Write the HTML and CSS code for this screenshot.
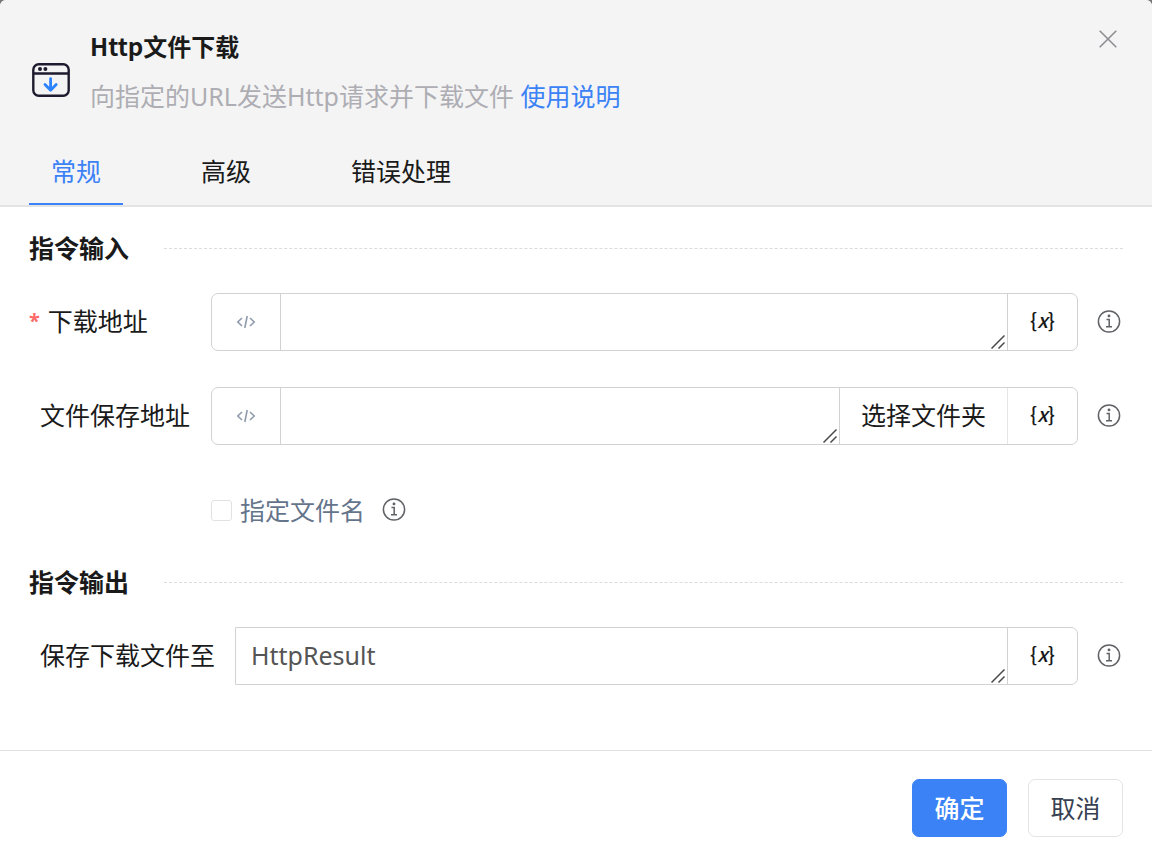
FILE: index.html
```html
<!DOCTYPE html>
<html lang="zh-CN">
    <head>
        <meta charset="UTF-8">
        <title>Http文件下载</title>
        <link rel="stylesheet" href="styles.css">
    </head>
    <body>
        <svg width="0" height="0" class="sprite">
            <symbol id="info" viewBox="0 0 24 24">
                <circle cx="12" cy="11.5" r="10.6" />
                <path d="M9.5 9.5h2.7v7M9 16.7h6" />
                <circle cx="12" cy="5.9" r="0.7" />
            </symbol>
            <symbol id="code" viewBox="0 0 20 16">
                <path d="M6 4L1.8 8L6 12M14 4l4.2 4L14 12M11.2 2L8.8 14" />
            </symbol>
            <symbol id="grip" viewBox="0 0 14 14">
                <path d="M0.5 13.5l13-13M7.5 13.5l6-6" />
            </symbol>
        </svg>

        <form class="dialog">
            <header class="dialog-header">
                <div class="header-top">
                    <svg class="header-icon" viewBox="0 0 38 34">
                        <rect x="1.3" y="1.3" width="35.4" height="31.4" rx="5.5" />
                        <path d="M1.3 10.5h35.4" />
                        <circle cx="8" cy="6" r="2" class="dot" />
                        <circle cx="13.4" cy="6" r="2" class="dot" />
                        <path d="M18.6 15.6v11.6M13 21.6l5.6 5.6l5.6-5.6" class="arrow" />
                    </svg>
                    <div class="header-text">
                        <h1 class="title">Http文件下载</h1>
                        <p class="desc">向指定的URL发送Http请求并下载文件 <a href="#help">使用说明</a></p>
                    </div>
                    <button type="button" class="close-button" aria-label="关闭">
                        <svg viewBox="0 0 18 18"><path d="M0.7 0.7l16.6 16.6M17.3 0.7L0.7 17.3" /></svg>
                    </button>
                </div>
                <nav class="tabs">
                    <button type="button" class="tab active">常规</button>
                    <button type="button" class="tab">高级</button>
                    <button type="button" class="tab">错误处理</button>
                </nav>
            </header>

            <main class="dialog-body">
                <h2 class="section-title">指令输入</h2>

                <div class="form-row">
                    <label for="url" class="row-label required">下载地址</label>
                    <div class="input-group">
                        <button type="button" class="code-button" aria-label="代码"><svg><use href="#code" /></svg></button>
                        <div class="text-wrap">
                            <textarea id="url" rows="1"></textarea>
                            <svg class="grip"><use href="#grip" /></svg>
                        </div>
                        <button type="button" class="var-button">{<i>x</i>}</button>
                    </div>
                    <svg class="info-icon"><use href="#info" /></svg>
                </div>

                <div class="form-row">
                    <label for="folder" class="row-label">文件保存地址</label>
                    <div class="input-group">
                        <button type="button" class="code-button" aria-label="代码"><svg><use href="#code" /></svg></button>
                        <div class="text-wrap">
                            <textarea id="folder" rows="1"></textarea>
                            <svg class="grip"><use href="#grip" /></svg>
                        </div>
                        <button type="button" class="folder-button">选择文件夹</button>
                        <button type="button" class="var-button light">{<i>x</i>}</button>
                    </div>
                    <svg class="info-icon"><use href="#info" /></svg>
                </div>

                <div class="form-row check-row">
                    <input type="checkbox" id="rename" class="checkbox">
                    <label for="rename" class="check-label">指定文件名</label>
                    <svg class="info-icon"><use href="#info" /></svg>
                </div>

                <h2 class="section-title">指令输出</h2>

                <div class="form-row">
                    <label for="result" class="row-label">保存下载文件至</label>
                    <div class="input-group square">
                        <div class="text-wrap">
                            <textarea id="result" rows="1">HttpResult</textarea>
                            <svg class="grip"><use href="#grip" /></svg>
                        </div>
                        <button type="button" class="var-button">{<i>x</i>}</button>
                    </div>
                    <svg class="info-icon"><use href="#info" /></svg>
                </div>
            </main>

            <footer class="dialog-footer">
                <button type="submit" class="button primary">确定</button>
                <button type="button" class="button">取消</button>
            </footer>
        </form>
    </body>
</html>
```
FILE: styles.css
```css
*{
    box-sizing: border-box;
}
body{
    margin: 0;
    background-color: #777;
    font-family: "Noto Sans", "Noto Sans CJK SC", sans-serif;
    font-size: 25px;
    line-height: 36px;
    color: #1a1a1a;
}
button, textarea{
    font: inherit;
    color: inherit;
    margin: 0;
    padding: 0;
    border: none;
    background-color: transparent;
}
button{
    cursor: pointer;
}
svg{
    display: block;
    fill: none;
    stroke: currentColor;
}
.sprite{
    position: absolute;
}
.dialog{
    display: flex;
    flex-direction: column;
    min-height: 100vh;
    background-color: white;
    border-radius: 6px 6px 0 0;
    overflow: hidden;
}

/* header */
.dialog-header{
    padding: 28px 29px 0;
    background-color: #f4f4f4;
    border-bottom: 2px solid #e4e4e4;
}
.header-top{
    display: flex;
    align-items: flex-start;
}
.header-icon{
    width: 38px;
    height: 34px;
    margin: 35px 20px 0 3px;
    color: #1e1b2e;
    stroke-width: 2.4;
}
.header-icon .dot{
    fill: #1e1b2e;
    stroke: none;
}
.header-icon .arrow{
    stroke: #2b83ff;
    stroke-width: 2.8;
    stroke-linecap: round;
    stroke-linejoin: round;
}
.header-text{
    flex: 1;
}
.title{
    margin: 0 0 14px;
    font-family: "Noto Sans CJK SC", sans-serif;
    font-size: 24px;
    font-weight: 700;
}
.desc{
    margin: 0;
    color: #adadb3;
}
.desc a{
    color: #3b82f6;
    text-decoration: none;
}
.close-button{
    padding: 2px 6px;
    color: #8e8e93;
}
.close-button svg{
    width: 18px;
    height: 18px;
    stroke-width: 1.6;
}
.tabs{
    display: flex;
    gap: 56px;
    margin-top: 39px;
}
.tab{
    padding: 0 22px 14px;
    border-bottom: 2px solid transparent;
}
.tab.active{
    color: #3b82f6;
    border-bottom-color: #3b82f6;
}

/* form */
.dialog-body{
    flex: 1;
    padding: 21px 29px 65px;
}
.section-title{
    display: flex;
    align-items: center;
    gap: 35px;
    margin: 0 0 25px;
    font-size: 25px;
    font-weight: 700;
    line-height: 40px;
}
.section-title::after{
    content: "";
    flex: 1;
    border-top: 1px dashed #dcdce0;
}
.form-row{
    display: flex;
    align-items: center;
    min-height: 58px;
    margin-bottom: 36px;
    padding-right: 2px;
}
.form-row:last-child{
    margin-bottom: 0;
}
.row-label{
    min-width: 182px;
    padding: 0 20px 2px 11px;
}
.required{
    display: flex;
    gap: 8px;
    padding-left: 0;
}
.required::before{
    content: "*";
    color: #ff6b6b;
    font-size: 20px;
    font-weight: 700;
}
.input-group{
    flex: 1;
    display: flex;
    height: 58px;
    border: 1px solid #d2d2d2;
    border-radius: 7px;
}
.input-group.square{
    border-radius: 0 7px 7px 0;
}
.code-button{
    width: 69px;
    border-right: 1px solid #d2d2d2;
    color: #8f9bac;
}
.code-button svg{
    width: 20px;
    height: 16px;
    margin: 0 auto;
    stroke-width: 1.6;
}
.text-wrap{
    position: relative;
    flex: 1;
    display: flex;
}
.text-wrap textarea{
    width: 100%;
    padding: 9px 15px;
    resize: none;
    outline: none;
    overflow: hidden;
    color: #555;
}
.grip{
    position: absolute;
    right: 2px;
    bottom: 1px;
    width: 14px;
    height: 14px;
    color: #4a4a4a;
    stroke-width: 1.5;
    pointer-events: none;
}
.var-button{
    width: 70px;
    padding-bottom: 4px;
    border-left: 1px solid #d2d2d2;
    font-family: "Noto Sans CJK SC", sans-serif;
    font-size: 20px;
    font-weight: 500;
}
.var-button.light{
    border-left-color: #e6e6e6;
}
.folder-button{
    padding: 0 21px 2px;
    border-left: 1px solid #d2d2d2;
}
.info-icon{
    width: 24px;
    height: 24px;
    margin-left: 19px;
    color: #606266;
    stroke-width: 1.5;
}
.check-row{
    margin: 0 0 23px;
    padding-left: 182px;
}
.checkbox{
    appearance: none;
    width: 21px;
    height: 21px;
    margin: 0 8px 0 0;
    border: 1px solid #e2e2e2;
    border-radius: 3px;
}
.checkbox:checked{
    background-color: #3b82f6;
}
.check-label{
    color: #64748b;
}
.check-row .info-icon{
    margin-left: 17px;
}

/* footer */
.dialog-footer{
    display: flex;
    justify-content: flex-end;
    gap: 21px;
    padding: 28px 29px 29px;
    border-top: 1px solid #e2e2e2;
}
.button{
    min-width: 95px;
    height: 58px;
    border: 1px solid #e4e4e8;
    border-radius: 7px;
    color: #374151;
}
.button.primary{
    background-color: #3b82f6;
    border-color: #3b82f6;
    color: white;
    font-weight: 500;
}
.button:hover{
    opacity: 0.8;
}
```
